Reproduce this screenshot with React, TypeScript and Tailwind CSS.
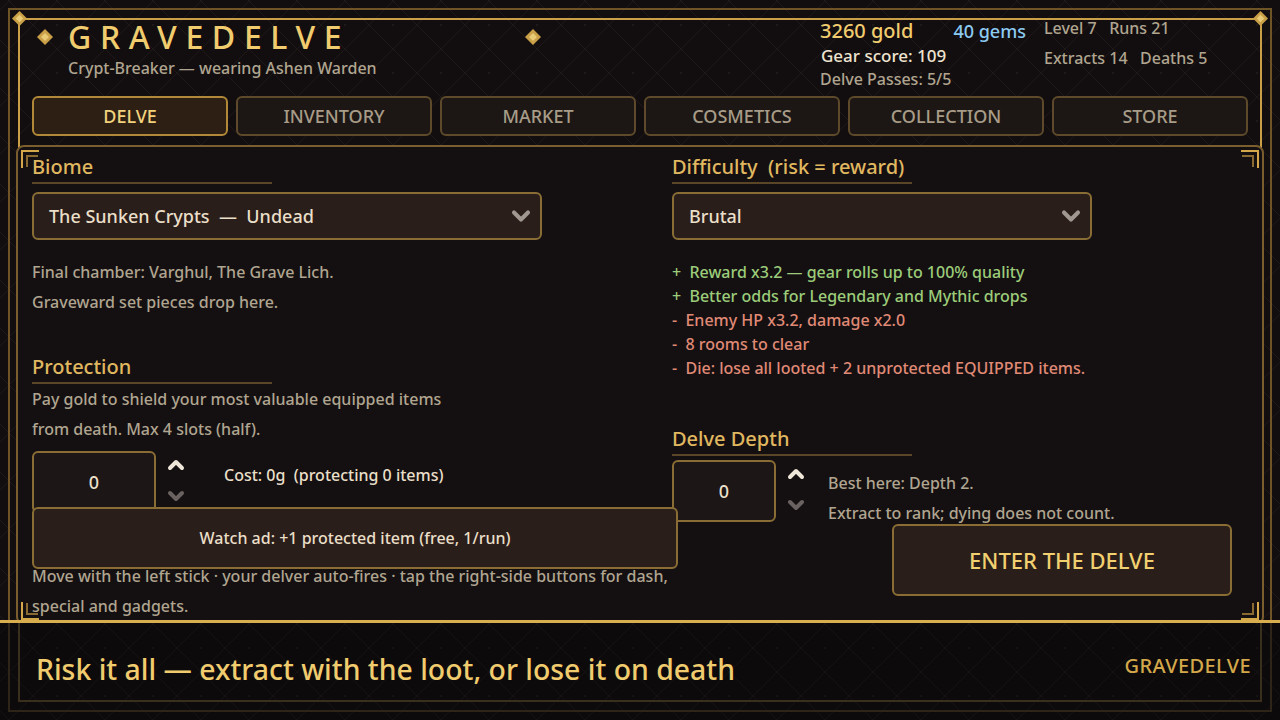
import { ChevronDown, ChevronUp } from 'lucide-react';

const font = { fontFamily: '"Noto Sans", "Open Sans", sans-serif' };

function Diamond({ className }: { className: string }) {
  return (
    <svg viewBox="0 0 12 12" className={className}>
      <path d="M6 0 L12 6 L6 12 L0 6 Z" fill="currentColor" />
      <path d="M6 3 L9 6 L6 9 L3 6 Z" fill="#f5dc8c" opacity="0.7" />
    </svg>
  );
}

function Pattern({ id, color }: { id: string; color: string }) {
  return (
    <svg className="absolute inset-0 w-full h-full" aria-hidden>
      <defs>
        <pattern id={id} width="48" height="48" patternUnits="userSpaceOnUse" x="-15" y="1">
          <path d="M24 0 L48 24 L24 48 L0 24 Z" fill="none" stroke={color} strokeWidth="1" />
          <rect x="23" y="23" width="2" height="2" fill={color} />
        </pattern>
      </defs>
      <rect width="100%" height="100%" fill={`url(#${id})`} />
    </svg>
  );
}

function Corner({ pos }: { pos: 'tl' | 'tr' | 'bl' | 'br' }) {
  const place = {
    tl: 'top-[3px] left-[3px]',
    tr: 'top-[3px] right-[3px] rotate-90',
    bl: 'bottom-[3px] left-[3px] -rotate-90',
    br: 'bottom-[3px] right-[3px] rotate-180',
  }[pos];
  return (
    <div className={`absolute w-[18px] h-[18px] ${place}`}>
      <div className="absolute top-0 left-0 w-[18px] h-[18px] border-t-2 border-l-2 border-[#d4a84a]" />
      <div className="absolute top-[5px] left-[5px] w-[12px] h-[12px] border-t-2 border-l-2 border-[#8a6a30]" />
    </div>
  );
}

function Heading({ children }: { children: React.ReactNode }) {
  return (
    <div className="w-[240px] border-b-2 border-[#5a4526] pb-[1px]">
      <div className="text-[20px] leading-[28px] font-medium text-[#e0b860] whitespace-pre">{children}</div>
    </div>
  );
}

function Select({ label, width }: { label: string; width: string }) {
  return (
    <div
      className={`${width} h-[48px] mt-[8px] flex items-center justify-between pl-[15px] pr-[5px] bg-[#2a1e1a] border-2 border-[#8a6d35] rounded-md`}
    >
      <span className="text-[18px] font-medium text-[#eadfc8] whitespace-pre">{label}</span>
      <ChevronDown size={28} strokeWidth={3.5} className="text-[#a09890]" />
    </div>
  );
}

function Stepper({ width }: { width: string }) {
  return (
    <div className="flex items-start">
      <div
        className={`${width} h-[62px] flex items-center justify-center bg-[#1c1616] border-2 border-[#8a6d35] rounded-md text-[18px] font-medium text-[#eadfc8]`}
      >
        0
      </div>
      <div className="flex flex-col items-center ml-[8px] mt-[2px]">
        <ChevronUp size={24} strokeWidth={4} className="text-[#eee6d8]" />
        <ChevronDown size={24} strokeWidth={4} className="text-[#6a6260] mt-[7px]" />
      </div>
    </div>
  );
}

const tabs = ['DELVE', 'INVENTORY', 'MARKET', 'COSMETICS', 'COLLECTION', 'STORE'];

export default function App() {
  return (
    <div className="relative w-[1280px] h-[720px] overflow-hidden bg-[#120e0f]" style={font}>
      <Pattern id="bgdiam" color="#1f1819" />

      {/* outer frame */}
      <div className="absolute left-[8px] right-[8px] top-[8px] h-[612px] border-t-2 border-l-2 border-r-2 border-[#6e5426]" />
      <div className="absolute left-[18px] right-[18px] top-[18px] h-[602px] border-t-2 border-l-2 border-r-2 border-[#c9a048]" />
      <Diamond className="absolute left-[12px] top-[11px] w-[15px] h-[15px] text-[#c9a048]" />
      <Diamond className="absolute right-[12px] top-[11px] w-[15px] h-[15px] text-[#c9a048]" />

      <div className="relative flex flex-col h-full">
        {/* header */}
        <div className="h-[96px] flex whitespace-nowrap">
          <div className="w-[790px] shrink-0 pt-[17px] pl-[37px]">
            <div className="flex items-center">
              <Diamond className="w-[16px] h-[16px] text-[#c9a048]" />
              <div className="ml-[15px] text-[32px] leading-[40px] font-medium tracking-[0.27em] text-[#f0cc6e]">
                GRAVEDELVE
              </div>
              <Diamond className="ml-[175px] w-[16px] h-[16px] text-[#c9a048]" />
            </div>
            <div className="ml-[31px] mt-[1px] text-[16px] leading-[20px] font-medium text-[#b0a590]">
              Crypt-Breaker — wearing Ashen Warden
            </div>
          </div>
          <div className="w-[254px] shrink-0 pt-[18px] pl-[30px]">
            <div className="flex items-baseline text-[20px] leading-[26px] font-medium">
              <span className="text-[#f0cc6e]">3260 gold</span>
              <span className="ml-[40px] text-[18px] text-[#8ccaf2]">40 gems</span>
            </div>
            <div className="text-[17px] leading-[24px] font-medium text-[#eee4d0] ml-[1px]">Gear score: 109</div>
            <div className="text-[16px] leading-[22px] font-medium text-[#b0a590]">Delve Passes: 5/5</div>
          </div>
          <div className="pt-[17px] text-[16px] font-medium text-[#b0a590] leading-[22px]">
            <div className="whitespace-pre">Level 7   Runs 21</div>
            <div className="whitespace-pre mt-[8px]">Extracts 14   Deaths 5</div>
          </div>
        </div>

        {/* tabs */}
        <div className="flex gap-[8px] px-[32px] h-[40px]">
          {tabs.map((t, i) => (
            <div
              key={t}
              className={
                i === 0
                  ? 'flex-1 flex items-center justify-center rounded-md border-2 border-[#b08838] bg-[#2e1f15] text-[18px] font-medium text-[#f2d27c]'
                  : 'flex-1 flex items-center justify-center rounded-md border-2 border-[#5e4a2a] bg-[#1c1714] text-[18px] font-medium text-[#a89c88]'
              }
            >
              {t}
            </div>
          ))}
        </div>

        {/* main panel */}
        <div className="relative mt-[9px] mx-[16px] h-[480px] bg-[#141011] border-2 border-[#7a5e2e] rounded-lg">
          <Corner pos="tl" />
          <Corner pos="tr" />
          <Corner pos="bl" />
          <Corner pos="br" />
          <div className="flex pl-[14px] pt-[6px]">
            {/* left column */}
            <div className="w-[640px] shrink-0">
              <Heading>Biome</Heading>
              <Select label="The Sunken Crypts  —  Undead" width="w-[510px]" />
              <div className="mt-[17px] text-[16px] leading-[30px] font-medium text-[#b0a590]">
                <div>Final chamber: Varghul, The Grave Lich.</div>
                <div>Graveward set pieces drop here.</div>
              </div>
              <div className="mt-[36px]">
                <Heading>Protection</Heading>
              </div>
              <div className="text-[16px] leading-[30px] font-medium text-[#b0a590]">
                <div>Pay gold to shield your most valuable equipped items</div>
                <div>from death. Max 4 slots (half).</div>
              </div>
              <div className="flex h-[56px] mt-[7px]">
                <Stepper width="w-[124px]" />
                <div className="ml-[36px] mt-[12px] text-[16px] font-medium text-[#eadfc8] whitespace-pre">
                  Cost: 0g  (protecting 0 items)
                </div>
              </div>
              <div className="relative w-[646px] h-[62px] flex items-center justify-center bg-[#2a1e1a] border-2 border-[#8a6d35] rounded-md text-[16px] font-medium text-[#eadfc8]">
                Watch ad: +1 protected item (free, 1/run)
              </div>
              <div className="w-[650px] mt-[-8px] text-[16px] leading-[30px] font-medium text-[#b0a590]">
                Move with the left stick · your delver auto-fires · tap the right-side buttons for dash, special and gadgets.
              </div>
            </div>

            {/* right column */}
            <div className="w-[560px] shrink-0">
              <Heading>Difficulty  (risk = reward)</Heading>
              <Select label="Brutal" width="w-[420px]" />
              <div className="mt-[20px] text-[16px] leading-[24px] font-medium whitespace-pre">
                <div className="text-[#9ccc7a]">+  Reward x3.2 — gear rolls up to 100% quality</div>
                <div className="text-[#9ccc7a]">+  Better odds for Legendary and Mythic drops</div>
                <div className="text-[#e08a76]">-  Enemy HP x3.2, damage x2.0</div>
                <div className="text-[#e08a76]">-  8 rooms to clear</div>
                <div className="text-[#e08a76]">-  Die: lose all looted + 2 unprotected EQUIPPED items.</div>
              </div>
              <div className="mt-[45px]">
                <Heading>Delve Depth</Heading>
              </div>
              <div className="flex mt-[4px]">
                <Stepper width="w-[104px]" />
                <div className="ml-[20px] mt-[8px] text-[16px] leading-[30px] font-medium text-[#b0a590]">
                  <div>Best here: Depth 2.</div>
                  <div>Extract to rank; dying does not count.</div>
                </div>
              </div>
              <div className="flex justify-end mt-[-4px]">
                <div className="w-[340px] h-[72px] flex items-center justify-center bg-[#2a1e1a] border-2 border-[#8a6d35] rounded-md text-[22px] font-medium text-[#f2d070]">
                  ENTER THE DELVE
                </div>
              </div>
            </div>
          </div>
        </div>
      </div>

      {/* footer */}
      <div className="absolute left-0 right-0 top-[620px] h-[3px] bg-[#d8ae4e]" />
      <div className="absolute left-0 right-0 top-[623px] bottom-0 bg-[#0d0a0b] overflow-hidden">
        <Pattern id="ftdiam" color="#161213" />
        <div className="absolute left-[8px] right-[8px] top-0 bottom-[8px] border-l-2 border-r-2 border-b-2 border-[#2e2418]" />
        <div className="absolute left-[18px] right-[18px] top-0 bottom-[18px] border-l-2 border-r-2 border-b-2 border-[#3a2e1c]" />
        <div className="relative flex items-center justify-between h-[97px] pl-[36px] pr-[29px] pb-[4px]">
          <div className="text-[28.4px] font-medium text-[#f0cc6e]">Risk it all — extract with the loot, or lose it on death</div>
          <div className="text-[20px] tracking-[0.02em] font-medium text-[#d4a84a] mb-[8px]">GRAVEDELVE</div>
        </div>
      </div>
    </div>
  );
}
